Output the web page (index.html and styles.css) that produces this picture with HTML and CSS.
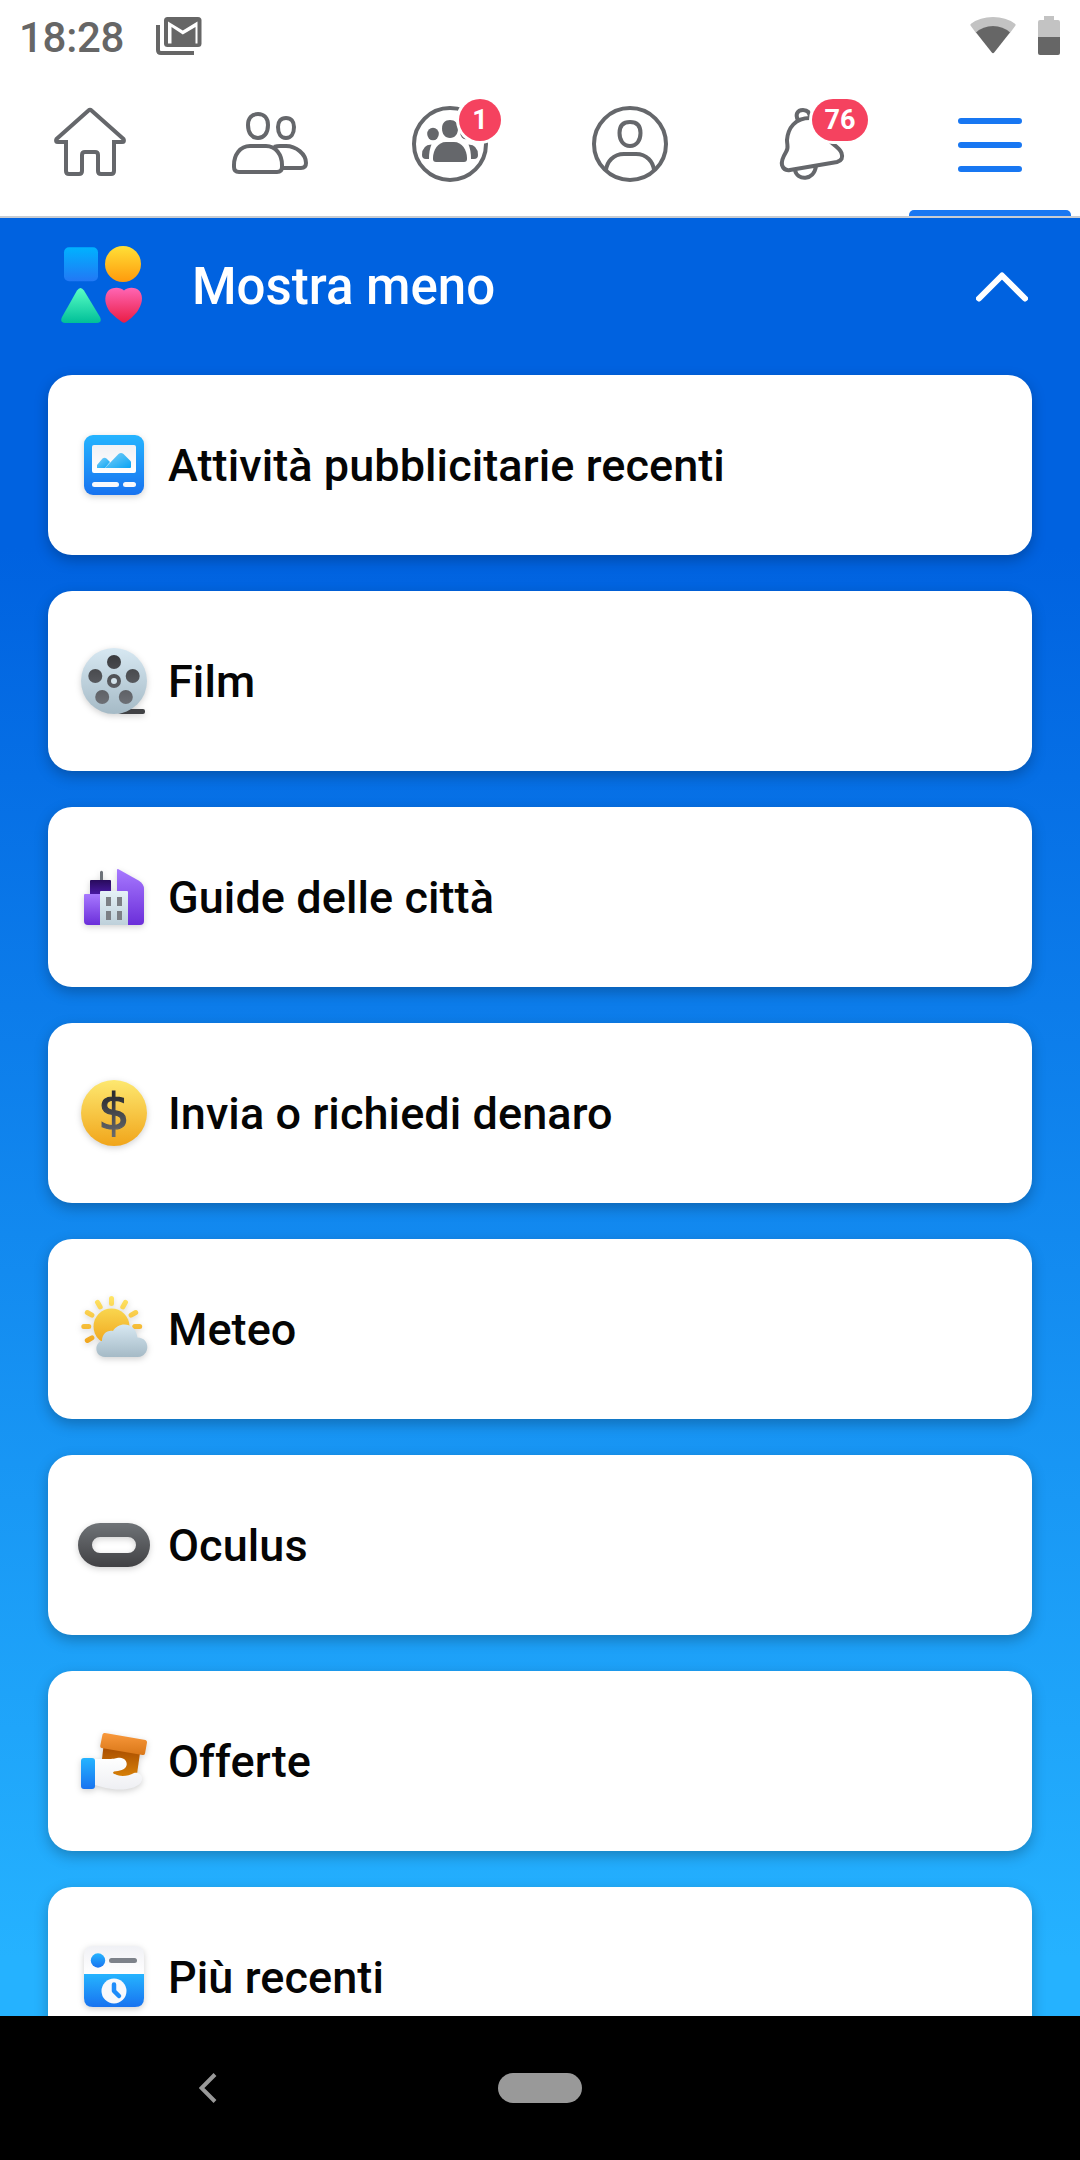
FILE: index.html
```html
<!DOCTYPE html>
<html lang="it">
  <head>
    <meta charset="UTF-8" />
    <meta name="viewport" content="width=device-width, initial-scale=1.0" />
    <title>Menu</title>
    <link rel="stylesheet" href="styles.css">
  </head>
  <body>
    <!-- shared gradients -->
    <svg class="defs" width="0" height="0">
      <defs>
        <linearGradient id="blue" x1="0" y1="0" x2="0" y2="1"><stop offset="0" stop-color="#25b4ff" /><stop offset="1" stop-color="#1873f0" /></linearGradient>
        <linearGradient id="square" x1="0" y1="0" x2="0" y2="1"><stop offset="0" stop-color="#00b2ff" /><stop offset="1" stop-color="#2278f5" /></linearGradient>
        <linearGradient id="yellow" x1="0" y1="0" x2="0" y2="1"><stop offset="0" stop-color="#ffe037" /><stop offset="1" stop-color="#ff9a0c" /></linearGradient>
        <linearGradient id="green" x1="0" y1="0" x2="0" y2="1"><stop offset="0" stop-color="#5affc5" /><stop offset="1" stop-color="#00bf98" /></linearGradient>
        <linearGradient id="pink" x1="0" y1="0" x2="0" y2="1"><stop offset="0" stop-color="#ff66b4" /><stop offset="1" stop-color="#ea1d45" /></linearGradient>
        <linearGradient id="steel" x1="0" y1="0" x2="0" y2="1"><stop offset="0" stop-color="#d7e8f2" /><stop offset="1" stop-color="#a5bac6" /></linearGradient>
        <linearGradient id="pale" x1="0" y1="0" x2="0" y2="1"><stop offset="0" stop-color="#e5f1f7" /><stop offset="1" stop-color="#bed0da" /></linearGradient>
        <linearGradient id="paper" x1="0" y1="0" x2="0" y2="1"><stop offset="0" stop-color="#f0f1f5" /><stop offset="1" stop-color="#ffffff" /></linearGradient>
        <linearGradient id="hand" x1="0" y1="0" x2="0" y2="1"><stop offset="0" stop-color="#ffffff" /><stop offset="1" stop-color="#eeeff3" /></linearGradient>
        <linearGradient id="purple" x1="0" y1="0" x2="0" y2="1"><stop offset="0" stop-color="#a779ff" /><stop offset="1" stop-color="#6b2ed9" /></linearGradient>
        <linearGradient id="indigo" x1="0" y1="0" x2="0" y2="1"><stop offset="0" stop-color="#280b5c" /><stop offset="1" stop-color="#4a1aa6" /></linearGradient>
        <linearGradient id="gold" x1="0" y1="0" x2="0" y2="1"><stop offset="0" stop-color="#fde870" /><stop offset="1" stop-color="#f1a51a" /></linearGradient>
        <linearGradient id="sun" x1="0" y1="0" x2="0" y2="1"><stop offset="0" stop-color="#f9d64f" /><stop offset="1" stop-color="#f0a51d" /></linearGradient>
        <linearGradient id="rays" gradientUnits="userSpaceOnUse" x1="0" y1="3" x2="0" y2="50"><stop offset="0" stop-color="#ffe667" /><stop offset="1" stop-color="#f0a51d" /></linearGradient>
        <linearGradient id="dark" gradientUnits="userSpaceOnUse" x1="0" y1="10" x2="0" y2="62"><stop offset="0" stop-color="#3a3b3e" /><stop offset="1" stop-color="#707379" /></linearGradient>
        <linearGradient id="dollar" x1="0" y1="0" x2="0" y2="1"><stop offset="0.2" stop-color="#2a2c30" /><stop offset="0.9" stop-color="#65676b" /></linearGradient>
        <linearGradient id="visor" x1="0" y1="0" x2="0" y2="1"><stop offset="0" stop-color="#6f7377" /><stop offset="1" stop-color="#414144" /></linearGradient>
        <linearGradient id="lid" x1="0" y1="0" x2="0" y2="1"><stop offset="0" stop-color="#f9993c" /><stop offset="1" stop-color="#d97718" /></linearGradient>
        <linearGradient id="box" x1="0" y1="0" x2="0" y2="1"><stop offset="0" stop-color="#a64a00" /><stop offset="1" stop-color="#d98207" /></linearGradient>
        <linearGradient id="hills" x1="0" y1="0" x2="1" y2="1"><stop offset="0" stop-color="#7fd0f8" /><stop offset="1" stop-color="#08a4f4" /></linearGradient>
      </defs>
    </svg>

    <div class="status-bar">
      <span class="time">18:28</span>
      <svg class="mail" width="46" height="38" viewBox="0 0 46 38">
        <path d="M2 8V33Q2 36 5 36H38" fill="none" stroke="#666" stroke-width="4" />
        <rect x="8" y="0" width="37.500" height="30" rx="3.500" fill="#666" />
        <path d="M12 4.500L26.800 13.500L41.500 4.500V26.500H39.500V10L26.800 17.500L15.500 10V26.500H12Z" fill="#fff" />
      </svg>
      <svg class="wifi" width="46" height="38" viewBox="0 0 46 38">
        <path d="M0.500 8.500Q0 7.500 1 6.700Q10 0 23 0T45 6.700Q46 7.500 45.500 8.500L40 16L23 9L6 16Z" fill="#c3c3c3" />
        <path d="M6 15.500Q13 9 23 9T40 15.500L24.200 35.500Q23 36.800 21.800 35.500Z" fill="#666" />
      </svg>
      <svg class="battery" width="22" height="39" viewBox="0 0 22 39">
        <path d="M6 0H16V4H20Q22 4 22 6V21H0V6Q0 4 2 4H6Z" fill="#c3c3c3" />
        <path d="M0 21H22V37Q22 39 20 39H2Q0 39 0 37Z" fill="#666" />
      </svg>
    </div>

    <nav class="tabs">
      <a class="tab">
        <svg viewBox="0 0 180 144">
          <path d="M88.500 38.500Q90 37 91.500 38.500L123.500 67Q125 70 122 70H114V99Q114 102 111 102H101Q98 102 98 99V83Q98 80 95 80H85Q82 80 82 83V99Q82 102 79 102H69Q66 102 66 99V70H58Q55 70 56.500 67Z" />
        </svg>
      </a>
      <a class="tab">
        <svg viewBox="0 0 180 144">
          <path d="M78 42C84 42 88 46 88 53C88 61 84 66 78 66S68 61 68 53C68 46 72 42 78 42Z" />
          <path d="M106 46C111 46 114 49.500 114 55C114 62 111 66 106 66S98 62 98 55C98 49.500 101 46 106 46Z" />
          <path d="M70 74H86C96 74 102 83 102 93V95Q102 100 97 100H59Q54 100 54 95V93C54 83 60 74 70 74Z" />
          <path d="M94 75Q97 74 100 74H106C116 74 126 82 126 91Q126 96 121 96H102" />
        </svg>
      </a>
      <a class="tab">
        <svg viewBox="0 0 180 144">
          <circle cx="90" cy="72" r="36" />
          <g class="solid">
            <path d="M90 48C95 48 98 51 98 56.500C98 62 95 66 90 66S82 62 82 56.500C82 51 85 48 90 48Z" />
            <ellipse cx="73" cy="62" rx="5.800" ry="6.300" />
            <ellipse cx="106" cy="61" rx="5.800" ry="6.300" />
            <path d="M86 70H94C102 70 107 78 107 86V87Q107 90 104 90H76Q73 90 73 87V86C73 78 78 70 86 70Z" />
            <path d="M71.500 72.500Q69 78 69 87H66Q62 87 62 83Q62 73 71.500 72.500Z" />
            <path d="M108.500 72.500Q111 78 111 87H114Q118 87 118 83Q118 73 108.500 72.500Z" />
          </g>
        </svg>
        <span class="badge">1</span>
      </a>
      <a class="tab">
        <svg viewBox="0 0 180 144">
          <circle cx="90" cy="72" r="36" />
          <path d="M90 50C97 50 100.500 54 100.500 61S97 74 90 74S79.500 68 79.500 61S83 50 90 50Z" />
          <path d="M66 98C67 90 73 82 84 82H96C107 82 113 90 114 98" />
        </svg>
      </a>
      <a class="tab">
        <svg viewBox="0 0 180 144">
          <path d="M78 48C75 43 77 38 83 38C88 38 90 41 90 46" />
          <path d="M90 46C75 46 68 56 67 68C67 74 69 76 66 80C63 85 61 89 62 93Q64 99 70 98L117 90Q124 88 121.500 81C120 77 117 75 113 72C109 69 107 65 106 60" />
          <path d="M75 98C77 109 94 109 96 94" />
        </svg>
        <span class="badge wide">76</span>
      </a>
      <a class="tab active">
        <svg viewBox="0 0 180 144">
          <path d="M61 49H119M61 73H119M61 97H119" />
        </svg>
      </a>
    </nav>

    <main class="menu">
      <header class="menu-header">
        <svg class="shapes" width="84" height="78" viewBox="0 0 84 78">
          <rect x="4" y="1.300" width="34" height="34" rx="5" fill="url(#square)" />
          <circle cx="63" cy="18" r="18" fill="url(#yellow)" />
          <path d="M17 44.500Q20.500 39.500 24 44.500L40 71Q42.500 76.500 37 77H5Q-0.500 76.500 2 71Z" fill="url(#green)" />
          <path d="M64 44.500C68 40.500 76 41 79.500 45C84 51 82 59 77 66Q72 72 66 76Q64 77.300 62 76Q56 72 50 66C45 59 43.500 51 48 45C52 41 60 40.500 64 44.500Z" fill="url(#pink)" />
        </svg>
        <h1>Mostra meno</h1>
        <svg class="chevron" width="52" height="30" viewBox="0 0 52 30">
          <path d="M3 26.500L26 3.500L49 26.500" />
        </svg>
      </header>

      <ul class="cards">
        <li class="card">
          <svg viewBox="0 0 72 72">
            <rect x="6" y="6" width="60" height="60" rx="9" fill="url(#blue)" />
            <rect x="14" y="16" width="44" height="28" rx="2" fill="url(#paper)" />
            <path d="M19 39V36L24.500 29.500Q26.500 28 28.500 29.500L32 33L27 39Z" fill="url(#hills)" />
            <path d="M27 39L40.500 25Q43 22.800 45.500 25L53 32.500V38Q53 39 52 39Z" fill="url(#hills)" />
            <rect x="14" y="53" width="27" height="5" rx="2.500" fill="#f8f9fc" />
            <rect x="45" y="53" width="13" height="5" rx="2.500" fill="#f8f9fc" />
          </svg>
          <span>Attività pubblicitarie recenti</span>
        </li>
        <li class="card">
          <svg viewBox="0 0 72 72">
            <path d="M40 69L52 64H65Q67 64 67 66V67Q67 69 65 69Z" fill="#414245" />
            <circle cx="36" cy="36" r="33" fill="url(#steel)" />
            <g fill="url(#dark)">
              <circle cx="36" cy="17" r="7" />
              <circle cx="17.300" cy="31" r="7" />
              <circle cx="54.700" cy="31" r="7" />
              <circle cx="24.200" cy="52" r="7" />
              <circle cx="47.800" cy="52" r="7" />
              <circle cx="36" cy="36" r="7" />
            </g>
            <circle cx="36" cy="36" r="3" fill="#d3e2ea" />
          </svg>
          <span>Film</span>
        </li>
        <li class="card">
          <svg viewBox="0 0 72 72">
            <path d="M22 20V11Q23.500 8.500 25 11V20Z" fill="#6d7279" />
            <path d="M12 20Q12 19 13 19H32Q33 19 33 20V34H12Z" fill="url(#indigo)" />
            <path d="M39 9Q39 7.500 40.500 8.200L61 19.800Q66 23 66 28V60Q66 64 62 64H39Z" fill="url(#purple)" />
            <path d="M6 34Q6 33 7 33H23V64H10Q6 64 6 60Z" fill="url(#purple)" />
            <path d="M22 31Q22 30 23 30H49Q50 30 50 31V64H22Z" fill="url(#pale)" />
            <path d="M28 36H33V45H28ZM39 36H44V45H39ZM28 50H33V59H28ZM39 50H44V59H39Z" fill="#7c7f85" />
          </svg>
          <span>Guide delle città</span>
        </li>
        <li class="card">
          <svg viewBox="0 0 72 72">
            <circle cx="36" cy="36" r="33" fill="url(#gold)" />
            <text class="dollar" x="36" y="51.500" text-anchor="middle" fill="url(#dollar)" stroke="url(#dollar)">$</text>
          </svg>
          <span>Invia o richiedi denaro</span>
        </li>
        <li class="card">
          <svg viewBox="0 0 72 72">
            <circle cx="33.500" cy="33.500" r="18" fill="url(#sun)" />
            <path d="M33.500 5.500V10.500M5.800 33.500H10.800M56.700 33.500H61.700M19.500 9.300L22.200 13.900M9.300 19.500L13.900 22.200M47.500 9.300L44.800 13.900M57.700 19.500L53.100 22.200M9.300 47.500L13.900 44.800" fill="none" stroke="url(#rays)" stroke-width="5" stroke-linecap="round" />
            <path d="M27 64C15 63 17 49 24 48C24 41 29 37 35 38C40 29 57 28 59.500 44.500C73 45 72 63 60 64Z" fill="url(#steel)" />
          </svg>
          <span>Meteo</span>
        </li>
        <li class="card">
          <svg viewBox="0 0 72 72">
            <path d="M22 14H50A22 22 0 0 1 50 58H22A22 22 0 0 1 22 14ZM22 28A8 8 0 0 0 22 44H50A8 8 0 0 0 50 28Z" fill="url(#visor)" />
          </svg>
          <span>Oculus</span>
        </li>
        <li class="card">
          <svg viewBox="0 0 72 72">
            <path d="M25.500 21L62 28L59 49L46 53L34 48L24 34Z" fill="url(#box)" />
            <path d="M24.500 9.500Q25 7.500 27 8L67.500 15Q69.300 15.500 69 17.500L67 28.500Q66.500 30.500 64.500 30L23.500 23Q22 22.500 22.200 21Z" fill="url(#lid)" />
            <path d="M17 34H31C37 34 38 32.500 42 32.700C47 33 49.500 37 48.500 40.500C47.500 45 41 46 36 46.500Q34 48 36 49C42 52 50 51.500 56 48C60 46.500 65 50 64 55C62 62 51 64.500 42 64.500C31 64.500 24 62 17 60Z" fill="url(#hand)" />
            <rect x="3" y="33" width="14" height="31" rx="3" fill="url(#blue)" />
          </svg>
          <span>Offerte</span>
        </li>
        <li class="card">
          <svg viewBox="0 0 72 72">
            <path d="M6 33V14Q6 5 15 5H57Q66 5 66 14V33Z" fill="url(#paper)" />
            <path d="M6 33H66V57Q66 66 57 66H15Q6 66 6 57Z" fill="url(#blue)" />
            <circle cx="20" cy="19.500" r="7.200" fill="url(#blue)" />
            <rect x="31" y="17" width="28" height="5" rx="2.500" fill="#7d828a" />
            <circle cx="36" cy="50" r="12.500" fill="#f8f9fc" />
            <path d="M36 43.500V50L41 55" fill="none" stroke="#1f8dfa" stroke-width="4.500" stroke-linecap="round" stroke-linejoin="round" />
          </svg>
          <span>Più recenti</span>
        </li>
      </ul>
    </main>

    <footer class="system-nav">
      <svg class="back" width="18" height="30" viewBox="0 0 18 30">
        <path d="M16 1.500L2.500 15L16 28.500" />
      </svg>
      <div class="home-pill"></div>
    </footer>
  </body>
</html>
```

FILE: styles.css
```css
* {
  box-sizing: border-box;
  font-family: Roboto, "Liberation Sans", sans-serif;
}
body {
  display: flex;
  flex-direction: column;
  height: 2160px;
  margin: 0;
  overflow: hidden;
  background-color: #fff;
}
.defs {
  position: absolute;
}

/* status bar */
.status-bar {
  display: flex;
  height: 72px;
  padding: 16px 20px 0 19px;
}
.time {
  width: 137px;
  margin-top: 1px;
  font-size: 42px;
  font-weight: 500;
  line-height: 42px;
  letter-spacing: -0.3px;
  color: #666;
}
.mail,
.wifi {
  margin-top: 1px;
}
.wifi {
  margin-left: auto;
}
.battery {
  margin-left: 22px;
}

/* tabs */
.tabs {
  display: grid;
  grid-template-columns: repeat(6, 1fr);
  height: 146px;
  border-bottom: 2px solid #c8ccd2;
}
.tab {
  position: relative;
}
.tab svg {
  display: block;
  width: 180px;
  height: 144px;
  fill: none;
  stroke: #65676b;
  stroke-width: 4;
}
.tab .solid {
  fill: #65676b;
  stroke: none;
}
.tab.active svg {
  stroke: #1877f2;
  stroke-width: 6;
  stroke-linecap: round;
}
.tab.active::after {
  content: "";
  position: absolute;
  bottom: 0;
  left: 9px;
  width: 162px;
  height: 6px;
  border-radius: 5px 5px 0 0;
  background-color: #1877f2;
}
.badge {
  position: absolute;
  top: 27px;
  left: 99px;
  width: 42px;
  height: 42px;
  border-radius: 21px;
  background-color: #f5425f;
  box-shadow: 0 0 0 3px #fff;
  color: #fff;
  font-size: 27px;
  font-weight: 700;
  line-height: 42px;
  text-align: center;
}
.badge.wide {
  left: 92px;
  width: 56px;
}

/* menu */
.menu {
  flex: 1;
  min-height: 0;
  overflow: hidden;
  background: linear-gradient(#0062e0 330px, #25b2ff 1740px);
}
.menu-header {
  display: flex;
  align-items: center;
  height: 157px;
  padding: 0 52px 20px 60px;
}
.shapes {
  margin-bottom: 4px;
}
.menu-header h1 {
  margin: 0 auto 0 48px;
  font-size: 51px;
  font-weight: 500;
  color: #fff;
}
.chevron {
  fill: none;
  stroke: #fff;
  stroke-width: 6;
  stroke-linecap: round;
  stroke-linejoin: round;
}
.cards {
  display: grid;
  gap: 36px;
  margin: 0;
  padding: 0 48px;
  list-style: none;
}
.card {
  display: flex;
  align-items: center;
  gap: 18px;
  height: 180px;
  padding: 0 30px;
  border-radius: 24px;
  background-color: #fff;
  box-shadow: 0 5px 14px rgba(0, 0, 0, 0.25);
  font-size: 45px;
  font-weight: 500;
  letter-spacing: 0.08px;
  color: #050505;
}
.card svg {
  width: 72px;
  height: 72px;
  overflow: visible;
  filter: drop-shadow(0 2px 3px rgba(0, 0, 0, 0.18));
}
.dollar {
  font-family: "DejaVu Sans", sans-serif;
  font-size: 50px;
  font-weight: 400;
  stroke-width: 1.2px;
}

/* system navigation */
.system-nav {
  display: grid;
  grid-template-columns: 199px 299px 84px;
  align-items: center;
  height: 144px;
  background-color: #000;
}
.back {
  grid-column: 2;
  fill: none;
  stroke: #999;
  stroke-width: 4;
}
.home-pill {
  grid-column: 3;
  height: 30px;
  border-radius: 15px;
  background-color: #999;
}
```
